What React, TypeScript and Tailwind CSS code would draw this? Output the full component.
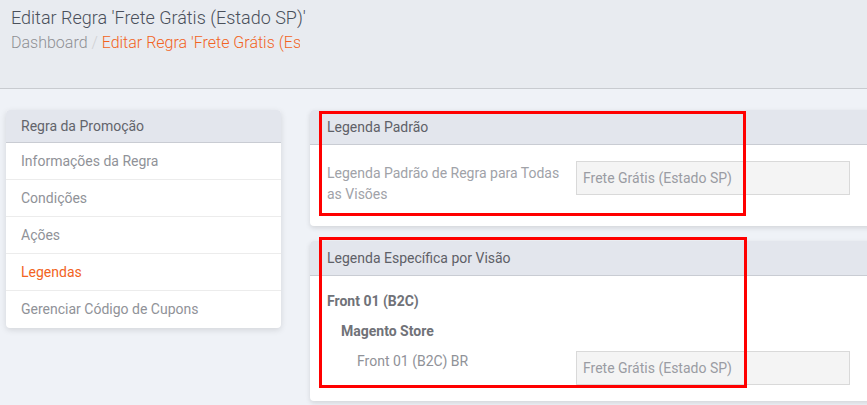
import React from 'react';

const menu = [
  { label: 'Informações da Regra' },
  { label: 'Condições' },
  { label: 'Ações' },
  { label: 'Legendas', active: true },
  { label: 'Gerenciar Código de Cupons' },
];

const Field = ({ value }: { value: string }) => (
  <div className="w-[274px] h-[34px] shrink-0 bg-[#f4f4f4] border border-[#d9d9d9] px-[6px] flex items-center text-[14px] text-[#9a9ca3]">
    {value}
  </div>
);

const Highlight = ({ className }: { className: string }) => (
  <div className={`absolute border-[3px] border-[#ff0000] pointer-events-none ${className}`} />
);

const App = () => {
  return (
    <div
      className="w-[867px] h-[405px] overflow-hidden bg-[#eff2f7]"
      style={{ fontFamily: 'Roboto, "Noto Sans", sans-serif' }}
    >
      <header className="h-[89px] bg-[#e8ebf0] border-b border-[#c8cbd0] pl-[11px] pt-[5px]">
        <h1 className="text-[18px] font-light leading-[26px] text-[#4a505b]">
          Editar Regra 'Frete Grátis (Estado SP)'
        </h1>
        <div className="w-[289px] overflow-hidden whitespace-nowrap text-[16px] font-light leading-[22px] mt-[1px]">
          <span className="text-[#8f9094]">Dashboard</span>
          <span className="text-[#cfd0d3]"> / </span>
          <span className="text-[#f26322]">Editar Regra 'Frete Grátis (Estado SP)'</span>
        </div>
      </header>

      <div className="flex items-start pt-[21px] pl-[6px] gap-[29px]">
        <aside className="w-[275px] shrink-0 bg-white rounded-[4px] shadow-[0_2px_6px_rgba(0,0,0,0.12)] overflow-hidden">
          <div className="h-[33px] bg-[#e3e6ed] border-b border-[#c9ccd3] px-[15px] flex items-center text-[14px] text-[#62646b]">
            Regra da Promoção
          </div>
          {menu.map((item, i) => (
            <div
              key={item.label}
              className={`h-[37px] px-[15px] flex items-center text-[14px] ${
                i < menu.length - 1 ? 'border-b border-[#ececec]' : ''
              } ${item.active ? 'text-[#f26322]' : 'text-[#909298]'}`}
            >
              {item.label}
            </div>
          ))}
        </aside>

        <main className="w-[600px] shrink-0 flex flex-col gap-[15px]">
          <section className="relative bg-white rounded-[4px] shadow-[0_2px_5px_rgba(0,0,0,0.12)]">
            <div className="h-[35px] bg-[#e3e6ed] border-b border-[#c9ccd3] rounded-t-[4px] px-[17px] flex items-center text-[14px] text-[#5e6067]">
              Legenda Padrão
            </div>
            <div className="flex items-start px-[17px] pt-[16px] pb-[21px]">
              <div className="w-[249px] pr-[16px] pt-[2px] text-[14px] leading-[21px] text-[#a0a2a8]">
                Legenda Padrão de Regra para Todas as Visões
              </div>
              <Field value="Frete Grátis (Estado SP)" />
            </div>
            <Highlight className="left-[9px] top-[1px] w-[427px] h-[105px]" />
          </section>

          <section className="relative bg-white rounded-[4px] shadow-[0_2px_5px_rgba(0,0,0,0.12)]">
            <div className="h-[35px] bg-[#e3e6ed] border-b border-[#c9ccd3] rounded-t-[4px] px-[17px] flex items-center text-[14px] text-[#5e6067]">
              Legenda Específica por Visão
            </div>
            <div className="px-[17px] pt-[16px] pb-[16px]">
              <div className="text-[14px] font-bold leading-[18px] text-[#707278]">Front 01 (B2C)</div>
              <div className="mt-[12px] pl-[14px] text-[14px] font-bold leading-[18px] text-[#707278]">
                Magento Store
              </div>
              <div className="mt-[11px] flex items-start">
                <div className="w-[249px] pl-[30px] text-[14px] leading-[21px] text-[#909298]">
                  Front 01 (B2C) BR
                </div>
                <Field value="Frete Grátis (Estado SP)" />
              </div>
            </div>
            <Highlight className="left-[9px] top-[-4px] w-[428px] h-[151px]" />
          </section>
        </main>
      </div>
    </div>
  );
};

export default App;
